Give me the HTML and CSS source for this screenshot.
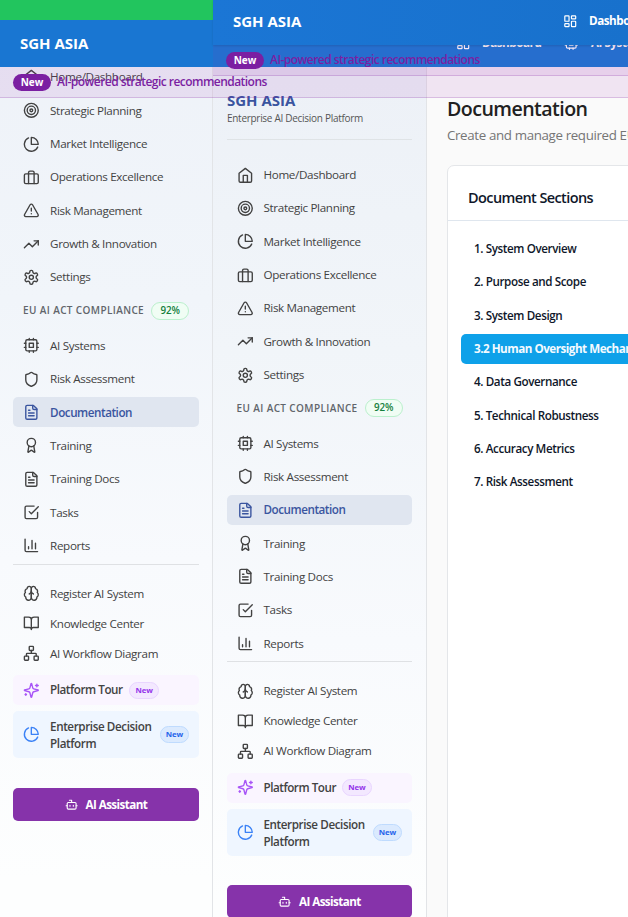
FILE: index.html
```
<!DOCTYPE html>
<html lang="en">
<head>
<meta charset="utf-8">
<title>SGH ASIA</title>
<link rel="stylesheet" href="styles.css">
</head>
<body>
<svg class="defs" aria-hidden="true">
  <symbol id="home" viewBox="0 0 24 24"><path d="m3 9 9-7 9 7v11a2 2 0 0 1-2 2H5a2 2 0 0 1-2-2z"/><path d="M9 22V12h6v10"/></symbol>
  <symbol id="target" viewBox="0 0 24 24"><circle cx="12" cy="12" r="10"/><circle cx="12" cy="12" r="6"/><circle cx="12" cy="12" r="2"/></symbol>
  <symbol id="pie" viewBox="0 0 24 24"><path d="M21.21 15.89A10 10 0 1 1 8 2.83"/><path d="M22 12A10 10 0 0 0 12 2v10z"/></symbol>
  <symbol id="case" viewBox="0 0 24 24"><rect x="2" y="7" width="20" height="14" rx="2"/><path d="M16 21V5a2 2 0 0 0-2-2h-4a2 2 0 0 0-2 2v16"/></symbol>
  <symbol id="alert" viewBox="0 0 24 24"><path d="m21.73 18-8-14a2 2 0 0 0-3.48 0l-8 14A2 2 0 0 0 4 21h16a2 2 0 0 0 1.73-3Z"/><path d="M12 9v4M12 17h.01"/></symbol>
  <symbol id="trend" viewBox="0 0 24 24"><path d="M22 7 13.5 15.5 8.5 10.5 2 17"/><path d="M16 7h6v6"/></symbol>
  <symbol id="gear" viewBox="0 0 24 24"><path d="M12.22 2h-.44a2 2 0 0 0-2 2v.18a2 2 0 0 1-1 1.73l-.43.25a2 2 0 0 1-2 0l-.15-.08a2 2 0 0 0-2.73.73l-.22.38a2 2 0 0 0 .73 2.73l.15.1a2 2 0 0 1 1 1.72v.51a2 2 0 0 1-1 1.74l-.15.09a2 2 0 0 0-.73 2.73l.22.38a2 2 0 0 0 2.73.73l.15-.08a2 2 0 0 1 2 0l.43.25a2 2 0 0 1 1 1.73V20a2 2 0 0 0 2 2h.44a2 2 0 0 0 2-2v-.18a2 2 0 0 1 1-1.73l.43-.25a2 2 0 0 1 2 0l.15.08a2 2 0 0 0 2.73-.73l.22-.39a2 2 0 0 0-.73-2.73l-.15-.08a2 2 0 0 1-1-1.74v-.5a2 2 0 0 1 1-1.74l.15-.09a2 2 0 0 0 .73-2.73l-.22-.38a2 2 0 0 0-2.73-.73l-.15.08a2 2 0 0 1-2 0l-.43-.25a2 2 0 0 1-1-1.73V4a2 2 0 0 0-2-2z"/><circle cx="12" cy="12" r="3"/></symbol>
  <symbol id="cpu" viewBox="0 0 24 24"><rect x="4" y="4" width="16" height="16" rx="2"/><rect x="9" y="9" width="6" height="6"/><path d="M15 2v2M15 20v2M2 15h2M2 9h2M20 15h2M20 9h2M9 2v2M9 20v2"/></symbol>
  <symbol id="shield" viewBox="0 0 24 24"><path d="M20 13c0 5-3.5 7.5-7.66 8.95a1 1 0 0 1-.67-.01C7.5 20.5 4 18 4 13V6a1 1 0 0 1 1-1c2 0 4.5-1.2 6.24-2.72a1.17 1.17 0 0 1 1.52 0C14.51 3.81 17 5 19 5a1 1 0 0 1 1 1z"/></symbol>
  <symbol id="file" viewBox="0 0 24 24"><path d="M15 2H6a2 2 0 0 0-2 2v16a2 2 0 0 0 2 2h12a2 2 0 0 0 2-2V7Z"/><path d="M14 2v4a2 2 0 0 0 2 2h4M10 9H8M16 13H8M16 17H8"/></symbol>
  <symbol id="award" viewBox="0 0 24 24"><circle cx="12" cy="8" r="6"/><path d="m15.48 12.89 1.52 8.53a.5.5 0 0 1-.81.47l-3.58-2.69a1 1 0 0 0-1.2 0l-3.58 2.69a.5.5 0 0 1-.81-.47l1.51-8.53"/></symbol>
  <symbol id="check" viewBox="0 0 24 24"><path d="m9 11 3 3L22 4"/><path d="M21 12v7a2 2 0 0 1-2 2H5a2 2 0 0 1-2-2V5a2 2 0 0 1 2-2h11"/></symbol>
  <symbol id="bars" viewBox="0 0 24 24"><path d="M3 3v16a2 2 0 0 0 2 2h16M18 17V9M13 17V5M8 17v-3"/></symbol>
  <symbol id="brain" viewBox="0 0 24 24"><path d="M12 5a3 3 0 1 0-5.997.125 4 4 0 0 0-2.526 5.77 4 4 0 0 0 .556 6.588A4 4 0 1 0 12 18Z"/><path d="M12 5a3 3 0 1 1 5.997.125 4 4 0 0 1 2.526 5.77 4 4 0 0 1-.556 6.588A4 4 0 1 1 12 18Z"/><path d="M15 13a4.5 4.5 0 0 1-3-4 4.5 4.5 0 0 1-3 4"/></symbol>
  <symbol id="book" viewBox="0 0 24 24"><path d="M2 3h6a4 4 0 0 1 4 4v14a3 3 0 0 0-3-3H2zM22 3h-6a4 4 0 0 0-4 4v14a3 3 0 0 1 3-3h7z"/></symbol>
  <symbol id="network" viewBox="0 0 24 24"><rect x="16" y="16" width="6" height="6" rx="1"/><rect x="2" y="16" width="6" height="6" rx="1"/><rect x="9" y="2" width="6" height="6" rx="1"/><path d="M5 16v-3a1 1 0 0 1 1-1h12a1 1 0 0 1 1 1v3M12 12V8"/></symbol>
  <symbol id="spark" viewBox="0 0 24 24"><path d="M9.937 15.5A2 2 0 0 0 8.5 14.063l-6.135-1.582a.5.5 0 0 1 0-.962L8.5 9.936A2 2 0 0 0 9.937 8.5l1.582-6.135a.5.5 0 0 1 .963 0L14.063 8.5A2 2 0 0 0 15.5 9.937l6.135 1.581a.5.5 0 0 1 0 .964L15.5 14.063a2 2 0 0 0-1.437 1.437l-1.582 6.135a.5.5 0 0 1-.963 0z"/><path d="M20 3v4M22 5h-4M4 17v2M5 18H3"/></symbol>
  <symbol id="bot" viewBox="0 0 24 24"><path d="M12 8V4H8"/><rect x="4" y="8" width="16" height="12" rx="2"/><path d="M2 14h2M20 14h2M15 13v2M9 13v2"/></symbol>
  <symbol id="dash" viewBox="0 0 24 24"><rect x="3" y="3" width="7" height="9" rx="1"/><rect x="14" y="3" width="7" height="5" rx="1"/><rect x="14" y="12" width="7" height="9" rx="1"/><rect x="3" y="16" width="7" height="5" rx="1"/></symbol>
</svg>

<div class="app">
  <aside class="sidebar first">
    <nav class="menu">
      <a class="row"><svg><use href="#home"/></svg>Home/Dashboard</a>
      <a class="row"><svg><use href="#target"/></svg>Strategic Planning</a>
      <a class="row"><svg><use href="#pie"/></svg>Market Intelligence</a>
      <a class="row"><svg><use href="#case"/></svg>Operations Excellence</a>
      <a class="row"><svg><use href="#alert"/></svg>Risk Management</a>
      <a class="row"><svg><use href="#trend"/></svg>Growth &amp; Innovation</a>
      <a class="row"><svg><use href="#gear"/></svg>Settings</a>
    </nav>
    <div class="group">EU AI ACT COMPLIANCE<span class="score">92%</span></div>
    <nav class="menu">
      <a class="row"><svg><use href="#cpu"/></svg>AI Systems</a>
      <a class="row"><svg><use href="#shield"/></svg>Risk Assessment</a>
      <a class="row active"><svg><use href="#file"/></svg>Documentation</a>
      <a class="row"><svg><use href="#award"/></svg>Training</a>
      <a class="row"><svg><use href="#file"/></svg>Training Docs</a>
      <a class="row"><svg><use href="#check"/></svg>Tasks</a>
      <a class="row"><svg><use href="#bars"/></svg>Reports</a>
    </nav>
    <div class="tools">
      <a class="row"><svg><use href="#brain"/></svg>Register AI System</a>
      <a class="row"><svg><use href="#book"/></svg>Knowledge Center</a>
      <a class="row"><svg><use href="#network"/></svg>AI Workflow Diagram</a>
    </div>
    <a class="row promo tour"><svg><use href="#spark"/></svg>Platform Tour<span class="tag">New</span></a>
    <a class="row promo edp"><svg><use href="#pie"/></svg><span class="two">Enterprise Decision<br>Platform</span><span class="tag">New</span></a>
    <button class="assistant"><svg><use href="#bot"/></svg>AI Assistant</button>
  </aside>

  <aside class="sidebar second">
    <div class="brand">
      <div class="name">SGH ASIA</div>
      <div class="tagline">Enterprise AI Decision Platform</div>
    </div>
    <nav class="menu">
      <a class="row"><svg><use href="#home"/></svg>Home/Dashboard</a>
      <a class="row"><svg><use href="#target"/></svg>Strategic Planning</a>
      <a class="row"><svg><use href="#pie"/></svg>Market Intelligence</a>
      <a class="row"><svg><use href="#case"/></svg>Operations Excellence</a>
      <a class="row"><svg><use href="#alert"/></svg>Risk Management</a>
      <a class="row"><svg><use href="#trend"/></svg>Growth &amp; Innovation</a>
      <a class="row"><svg><use href="#gear"/></svg>Settings</a>
    </nav>
    <div class="group">EU AI ACT COMPLIANCE<span class="score">92%</span></div>
    <nav class="menu">
      <a class="row"><svg><use href="#cpu"/></svg>AI Systems</a>
      <a class="row"><svg><use href="#shield"/></svg>Risk Assessment</a>
      <a class="row active"><svg><use href="#file"/></svg>Documentation</a>
      <a class="row"><svg><use href="#award"/></svg>Training</a>
      <a class="row"><svg><use href="#file"/></svg>Training Docs</a>
      <a class="row"><svg><use href="#check"/></svg>Tasks</a>
      <a class="row"><svg><use href="#bars"/></svg>Reports</a>
    </nav>
    <div class="tools">
      <a class="row"><svg><use href="#brain"/></svg>Register AI System</a>
      <a class="row"><svg><use href="#book"/></svg>Knowledge Center</a>
      <a class="row"><svg><use href="#network"/></svg>AI Workflow Diagram</a>
    </div>
    <a class="row promo tour"><svg><use href="#spark"/></svg>Platform Tour<span class="tag">New</span></a>
    <a class="row promo edp"><svg><use href="#pie"/></svg><span class="two">Enterprise Decision<br>Platform</span><span class="tag">New</span></a>
    <button class="assistant"><svg><use href="#bot"/></svg>AI Assistant</button>
  </aside>

  <main class="main">
    <h1>Documentation</h1>
    <p class="sub">Create and manage required EU AI Act documentation</p>
    <section class="card">
      <h2>Document Sections</h2>
      <div class="sections">
        <a>1. System Overview</a>
        <a>2. Purpose and Scope</a>
        <a>3. System Design</a>
        <a class="on">3.2 Human Oversight Mechanisms</a>
        <a>4. Data Governance</a>
        <a>5. Technical Robustness</a>
        <a>6. Accuracy Metrics</a>
        <a>7. Risk Assessment</a>
      </div>
    </section>
  </main>
</div>

<div class="status"></div>
<header class="bar lower">
  <span class="logo">SGH ASIA</span>
  <span class="link"><svg><use href="#dash"/></svg>Dashboard</span>
  <span class="link"><svg><use href="#cpu"/></svg>AI Systems</span>
</header>
<div class="banner back"><span class="pill">New</span>AI-powered strategic recommendations</div>
<div class="banner front"><span class="pill">New</span>AI-powered strategic recommendations</div>
<header class="bar upper">
  <span class="logo">SGH ASIA</span>
  <span class="link"><svg><use href="#dash"/></svg>Dashboard</span>
</header>
</body>
</html>
```

FILE: styles.css
```
* { box-sizing: border-box; }
body {
  margin: 0;
  height: 917px;
  position: relative;
  overflow: hidden;
  background: #fafafa;
  color: #424242;
  font: 400 11.67px/16.67px "Open Sans", "Noto Sans", sans-serif;
}
.defs { position: absolute; width: 0; height: 0; }
svg { fill: none; stroke: currentColor; stroke-width: 2; stroke-linecap: round; stroke-linejoin: round; flex: none; }
.app { display: grid; grid-template-columns: 213px 214px 1fr; height: 917px; }

.sidebar {
  border-right: 1px solid #e2e4e7;
  background: linear-gradient(180deg, #eef2f8 0, #f1f5fa 300px, #f8fafd 560px, #fdfefe 880px);
  overflow: hidden;
}
.first { padding: 62.3px 13px 0; }
.second {
  padding: 91px 14px 0;
  background: linear-gradient(180deg, #edf1f7 80px, #f1f5f9 350px, #f8fafd 640px, #fdfefe 900px);
}
.brand { height: 69px; }
.name { font-size: 15px; line-height: 19px; font-weight: 700; color: #3a559f; }
.tagline { font-size: 10px; line-height: 17px; letter-spacing: -.29px; color: #555; padding-bottom: 12px; border-bottom: 1px solid #dfe3e6; white-space: nowrap; }

.menu { display: flex; flex-direction: column; gap: 3.33px; }
.row { display: flex; align-items: center; height: 30px; padding: 1px 10px 0; gap: 10.4px; border-radius: 5px; white-space: nowrap; letter-spacing: -.34px; }
.second .row { gap: 9.8px; }
.row svg { width: 16.67px; height: 16.67px; margin-top: -1px; }
.active { background: #e0e6f0; color: #3a559f; font-weight: 600; letter-spacing: -.45px; }
.group { display: flex; align-items: center; height: 38.5px; padding: 0 0 2px 10px; font-size: 10px; font-weight: 600; letter-spacing: .38px; color: #61656b; white-space: nowrap; }
.second .group { padding-left: 9.5px; }
.score { margin-left: 7px; padding: 0 8.5px; height: 18px; line-height: 16px; border: 1px solid #bbf0cd; border-radius: 9px; background: #f0fdf4; color: #15803d; font-size: 9.8px; letter-spacing: -.2px; }
.tools { margin-top: 2.8px; border-top: 1px solid #dfe1e4; padding-top: 14px; }
.second .tools { margin-top: 2.6px; }
.promo { font-weight: 600; letter-spacing: -.45px; }
.tour { margin-top: 6.5px; background: #faf5ff; }
.tour svg { color: #a855f7; }
.edp { height: 47px; margin-top: 6px; background: #eff6ff; }
.edp svg { color: #3b82f6; }
.two { width: 102.5px; line-height: 17px; letter-spacing: -.4px; }
.tag { height: 17px; line-height: 15px; padding: 0 5px; border: 1px solid #e9d5ff; border-radius: 9px; background: #f3e8ff; color: #9333ea; font-size: 7.8px; font-weight: 700; letter-spacing: -.1px; margin: -1px 0 0 -3.6px; }
.edp .tag { border-color: #bfdbfe; background: #dbeafe; color: #2563eb; margin-left: -2px; }
.assistant {
  display: flex; align-items: center; justify-content: center; gap: 7.5px;
  width: 100%; height: 33px; margin-top: 30px; border: 0; border-radius: 5px;
  background: #8633aa; color: #fff; font: 700 11.67px/17px "Open Sans", sans-serif; letter-spacing: -.58px;
}
.second .assistant { margin-top: 29.5px; }
.assistant svg { width: 13.3px; height: 13.3px; }

.main { padding: 95px 0 0 20px; overflow: hidden; }
h1 { margin: 0; font-size: 19.6px; line-height: 27px; font-weight: 600; letter-spacing: -.55px; color: #212121; }
.sub { margin: 3px 0 0; font-size: 13.33px; line-height: 20px; letter-spacing: -.36px; color: #757575; white-space: nowrap; }
.card { width: 260px; height: 800px; margin-top: 20px; border: 1px solid #e4e6e9; border-radius: 7px; background: #fff; color: #0f172a; }
h2 { margin: 0; height: 55px; padding: 19px 20px 0; border-bottom: 1px solid #dfe6ee; font-size: 14.5px; line-height: 25px; font-weight: 600; letter-spacing: -.6px; }
.sections { display: flex; flex-direction: column; gap: 3.33px; padding: 13px; }
.sections a { height: 30px; padding: 0 13px; border-radius: 5px; line-height: 30px; font-weight: 600; letter-spacing: -.4px; white-space: nowrap; }
.sections .on { background: #0ea1e9; color: #f3faff; font-weight: 700; letter-spacing: -.5px; }

.status { position: absolute; left: 0; top: 0; width: 213px; height: 20px; background: #22c55e; }
.bar { position: absolute; right: 0; display: flex; align-items: center; background: #1976d2; color: #fff; white-space: nowrap; overflow: hidden; }
.lower { left: 0; top: 20px; height: 47px; padding-left: 20px; }
.upper { left: 213px; top: 0; height: 45px; padding: 0 0 2px 20px; background: linear-gradient(90deg, #1b76d5, #1871cc); box-shadow: 0 1px 2px rgba(0, 0, 0, .12); }
.logo { flex: none; font-size: 15px; font-weight: 700; width: 329.5px; }
.lower .logo { width: 435.5px; }
.link { flex: none; display: flex; align-items: center; gap: 12px; font-weight: 700; letter-spacing: -.45px; margin-right: 23px; }
.link svg { width: 14.5px; height: 14.5px; }
.banner { position: absolute; right: 0; height: 31px; display: flex; align-items: center; gap: 6px; background: rgba(156, 39, 176, .1); border-bottom: 1px solid rgba(123, 31, 162, .2); color: #7b1fa2; font-size: 12px; font-weight: 600; letter-spacing: -.54px; white-space: nowrap; }
.back { left: 213px; top: 45px; padding-left: 13px; }
.front { left: 0; top: 67px; padding-left: 13px; }
.pill { width: 38px; height: 17px; border-radius: 9px; background: #7b1fa2; color: #fff; font-size: 10px; line-height: 17px; font-weight: 700; letter-spacing: -.1px; text-align: center; }
```
